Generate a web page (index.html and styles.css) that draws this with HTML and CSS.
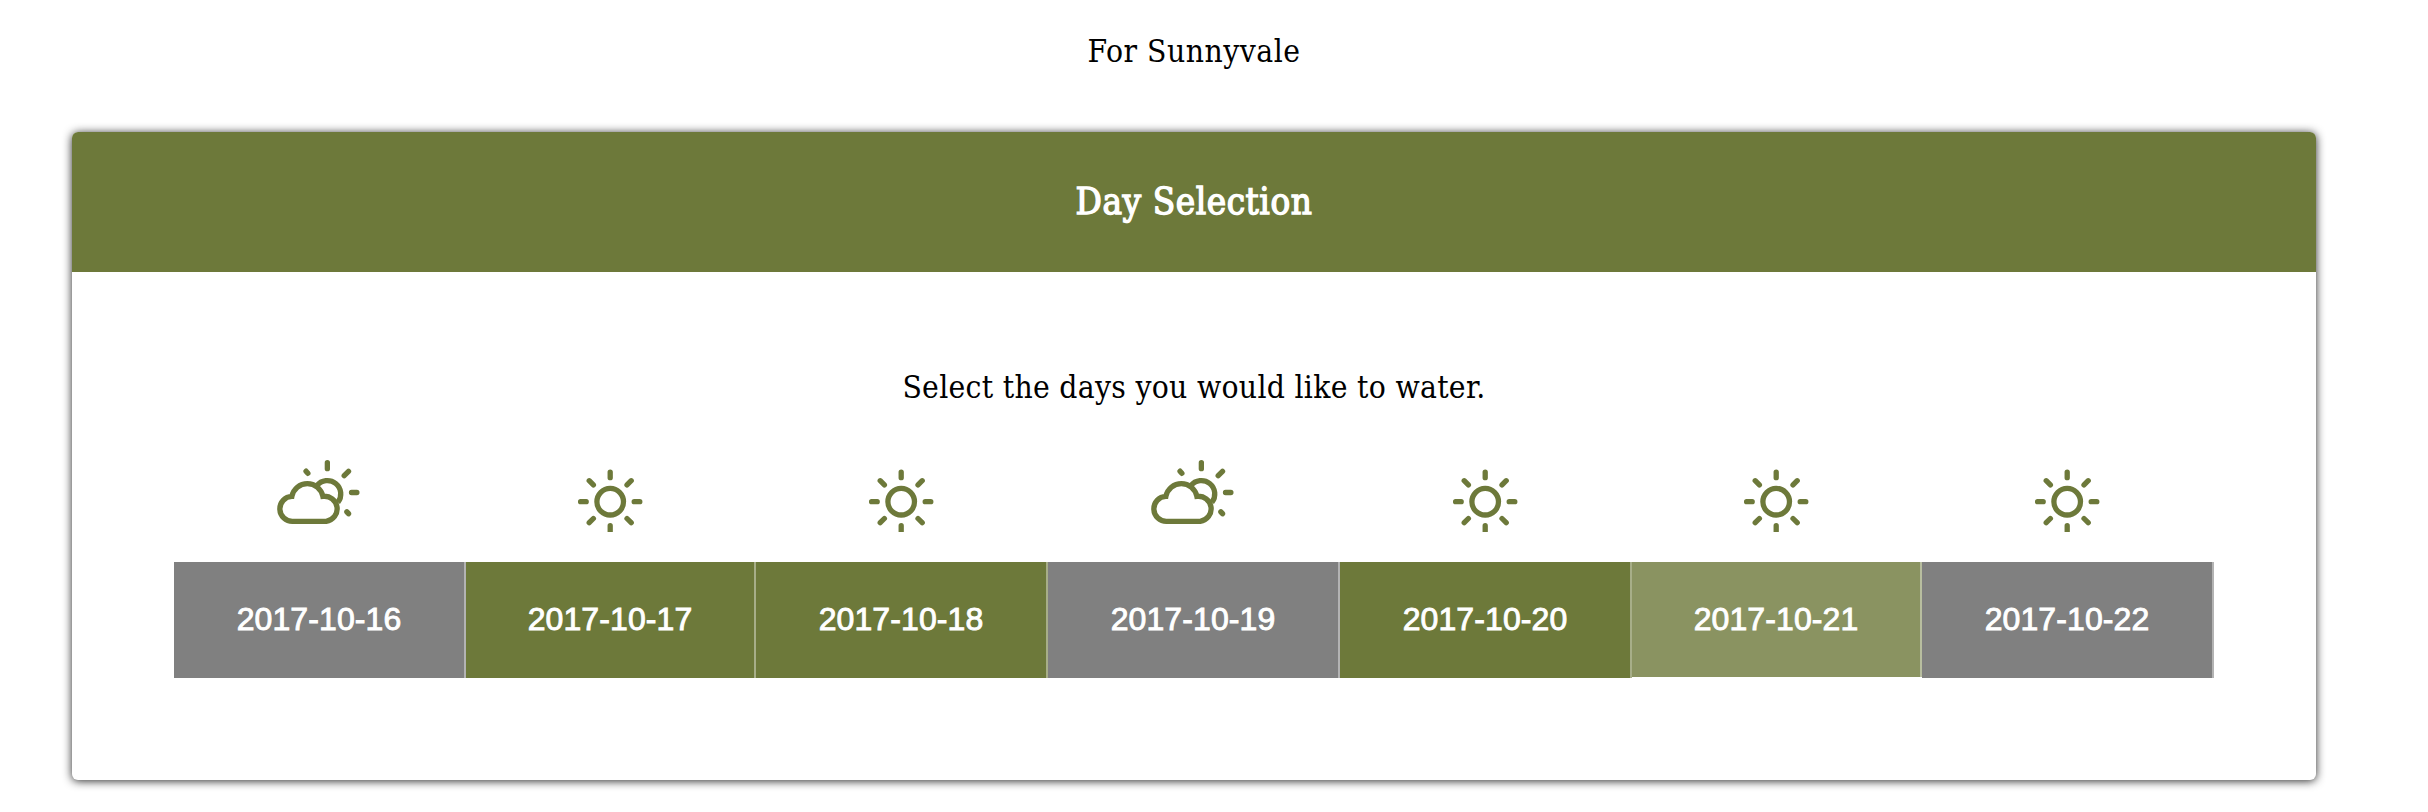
FILE: index.html
```html
<!DOCTYPE html>
<html lang="en">
<head>
<meta charset="utf-8">
<title>Day Selection</title>
<link rel="stylesheet" href="styles.css">
</head>
<body>
<svg class="defs" aria-hidden="true">
  <symbol id="sun" viewBox="-50 -49.7 100 80">
    <circle r="13.3"/>
    <path d="M0-29.6V-24M0 24V29.6M-29.6 0H-24M24 0H29.6M-21-21L-16.8-16.8M21-21L16.8-16.8M-21 21L-16.8 16.8M21 21L16.8 16.8"/>
  </symbol>
  <symbol id="cloud" viewBox="326 36 300 240">
    <g stroke-width="16">
      <path stroke-linecap="butt" d="M469 137A40 40 0 0 1 532 187"/>
      <path stroke-linejoin="miter" d="M497 244H397A37.5 37.5 0 0 1 394 169A47.4 47.4 0 0 1 487 169A37.5 37.5 0 0 1 497 244Z"/>
      <path d="M500.500 68V86M551 107L564 94M573 157.500H589M436.500 93.500L442 100M559 215.500L564 221"/>
    </g>
  </symbol>
</svg>
<p class="place">For Sunnyvale</p>
<section class="card">
  <h2 class="card-title">Day Selection</h2>
  <p class="prompt">Select the days you would like to water.</p>
  <div class="days">
    <div class="day"><svg class="icon"><use href="#cloud"/></svg><div class="date off">2017-10-16</div></div>
    <div class="day"><svg class="icon"><use href="#sun"/></svg><div class="date">2017-10-17</div></div>
    <div class="day"><svg class="icon"><use href="#sun"/></svg><div class="date">2017-10-18</div></div>
    <div class="day"><svg class="icon"><use href="#cloud"/></svg><div class="date off">2017-10-19</div></div>
    <div class="day"><svg class="icon"><use href="#sun"/></svg><div class="date">2017-10-20</div></div>
    <div class="day"><svg class="icon"><use href="#sun"/></svg><div class="date hover">2017-10-21</div></div>
    <div class="day"><svg class="icon"><use href="#sun"/></svg><div class="date off">2017-10-22</div></div>
  </div>
</section>
</body>
</html>
```
FILE: styles.css
```css
* { box-sizing: border-box; margin: 0; }
body {
  padding: 30px 112px 32px 72px;
  background: #fff;
  color: #000;
  font-family: "DejaVu Serif Condensed", "DejaVu Serif", serif;
  font-stretch: 90%;
}
.defs { display: none; }
.place, .prompt {
  font-size: 31.500px;
  line-height: 42px;
  letter-spacing: 0.3px;
  text-align: center;
}
.place { margin-bottom: 60px; letter-spacing: 0.5px; }
.card {
  height: 648px;
  border-radius: 6px;
  background: #fff;
  box-shadow: 0 1px 10px rgba(0, 0, 0, 0.85);
}
.card-title {
  height: 140px;
  border-radius: 6px 6px 0 0;
  background: #6d793a;
  color: #fff;
  font-size: 36.500px;
  font-weight: 400;
  line-height: 140px;
  letter-spacing: 0.55px;
  text-align: center;
  -webkit-text-stroke: 1.3px #fff;
}
.prompt { margin-top: 94px; }
.days {
  display: grid;
  grid-template-columns: 292px 290px 292px 292px 292px 290px 292px;
  justify-content: center;
  margin-top: 44px;
}
.day { display: flex; flex-direction: column; }
.icon {
  width: 100px;
  height: 80px;
  margin: 0 auto 30px;
  transform: translateX(-0.8px);
  fill: none;
  stroke: #6d793a;
  stroke-width: 5.3px;
  stroke-linecap: round;
}
.date {
  height: 116px;
  border-right: 2px solid rgba(255, 255, 255, 0.4);
  background: #6d793a;
  color: #fff;
  font: 32px/114px "Liberation Sans", Arial, sans-serif;
  letter-spacing: 0.1px;
  text-align: center;
  -webkit-text-stroke: 0.9px #fff;
}
.off { background: #808080; }
.hover { height: 115px; opacity: 0.8; }
```
